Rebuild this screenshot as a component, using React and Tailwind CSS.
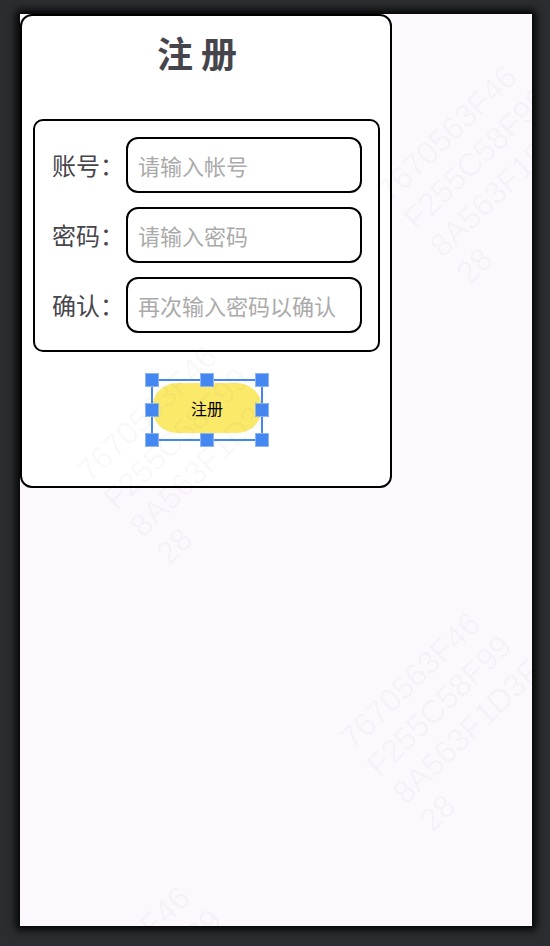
import React from "react";

const WM = [
  [70, 470],
  [333, 737],
  [370, 190],
  [43, 1011],
  [90, -80],
];

function Watermark({ x, y }) {
  return (
    <div
      className="absolute pointer-events-none whitespace-pre text-[32px] leading-[38px] text-[rgba(80,40,90,0.035)] [font-family:'Liberation_Sans',Arial,sans-serif] origin-[0_30px] -rotate-[44deg]"
      style={{ left: x, top: y - 30 }}
    >
      {"7670563F46\nF255C58F99\n8A563F1D3F\n28"}
    </div>
  );
}

function Row({ label, placeholder }) {
  return (
    <div className="flex items-center h-[56px]">
      <div className="w-[72px] mr-[2px] text-[24px] leading-[30px] text-[#46454b]">{label}</div>
      <div className="w-[236px] h-[56px] border-2 border-black rounded-[12px] flex items-center pl-[10px] text-[22px] text-[#aaaaaa] whitespace-nowrap overflow-hidden">
        {placeholder}
      </div>
    </div>
  );
}

function Handle({ className }) {
  return (
    <div className={"absolute w-[14px] h-[14px] bg-[#4487f0] border border-[#8db4f5] " + className} />
  );
}

export default function App() {
  return (
    <div className="w-full h-[946px] bg-[#2b2d31] pt-[14px] pl-[20px] overflow-hidden [font-family:'Noto_Sans_CJK_SC','Noto_Sans',sans-serif]">
      <div className="relative w-[512px] h-[912px] bg-[#fcf8fe] shadow-[0_0_8px_4px_rgba(0,0,0,0.95)] overflow-hidden">
        <div className="w-[372px] h-[474px] bg-white border-2 border-black rounded-[12px] flex flex-col">
          <div className="pt-[12px] text-center text-[36px] leading-[48px] font-bold text-[#46454b] pr-[18px]">
            注 册
          </div>
          <div className="mt-[43px] ml-[11px] w-[347px] border-2 border-black rounded-[10px] pt-[16px] pb-[17px] pl-[17px] flex flex-col gap-[14px]">
            <Row label="账号：" placeholder="请输入帐号" />
            <Row label="密码：" placeholder="请输入密码" />
            <Row label="确认：" placeholder="再次输入密码以确认" />
          </div>
          <div className="mt-[28px] flex justify-center">
            <div className="relative w-[110px] h-[60px] ml-[2px]">
              <div className="absolute left-0 right-0 top-[3px] h-[50px] rounded-full bg-[#fbe969] flex items-center justify-center text-[16px] text-black">
                注册
              </div>
              <div className="absolute -left-px -top-px -right-px -bottom-px border-2 border-[#4487f0]" />
              <Handle className="-left-[7px] -top-[7px]" />
              <Handle className="left-[48px] -top-[7px]" />
              <Handle className="-right-[7px] -top-[7px]" />
              <Handle className="-left-[7px] top-[23px]" />
              <Handle className="-right-[7px] top-[23px]" />
              <Handle className="-left-[7px] -bottom-[7px]" />
              <Handle className="left-[48px] -bottom-[7px]" />
              <Handle className="-right-[7px] -bottom-[7px]" />
            </div>
          </div>
        </div>
        {WM.map(([x, y], i) => (
          <Watermark key={i} x={x} y={y} />
        ))}
      </div>
    </div>
  );
}
